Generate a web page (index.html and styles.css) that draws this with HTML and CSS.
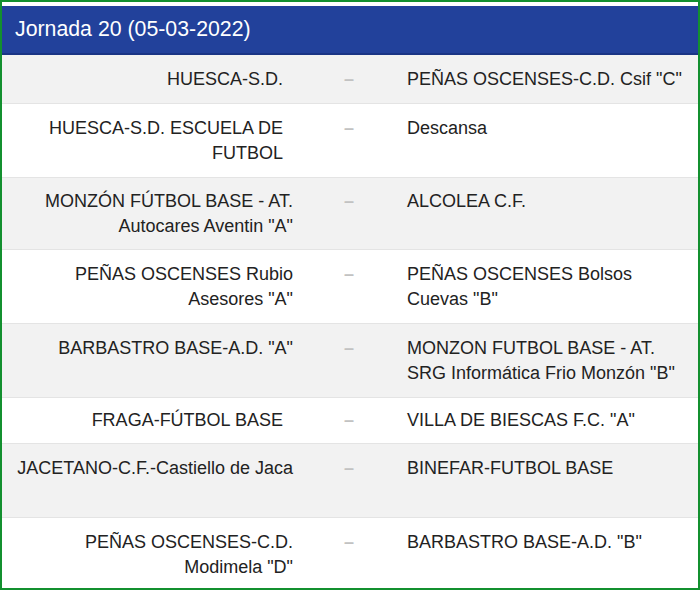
FILE: index.html
```html
<!DOCTYPE html>
<html lang="es">
<head>
<meta charset="utf-8">
<title>Jornada 20</title>
<link rel="stylesheet" href="styles.css">
</head>
<body>
<div class="frame">
  <div class="round">
    <h2 class="round__title">Jornada 20 (05-03-2022)</h2>
    <div class="match match--alt">
      <div class="team team--home team--inset">HUESCA-S.D.</div>
      <div class="sep">–</div>
      <div class="team team--away">PEÑAS OSCENSES-C.D. Csif "C"</div>
    </div>
    <div class="match">
      <div class="team team--home team--inset">HUESCA-S.D. ESCUELA DE FUTBOL</div>
      <div class="sep">–</div>
      <div class="team team--away">Descansa</div>
    </div>
    <div class="match match--alt match--snug">
      <div class="team team--home">MONZÓN FÚTBOL BASE - AT. Autocares Aventin "A"</div>
      <div class="sep">–</div>
      <div class="team team--away">ALCOLEA C.F.</div>
    </div>
    <div class="match">
      <div class="team team--home">PEÑAS OSCENSES Rubio Asesores "A"</div>
      <div class="sep">–</div>
      <div class="team team--away">PEÑAS OSCENSES Bolsos Cuevas "B"</div>
    </div>
    <div class="match match--alt">
      <div class="team team--home">BARBASTRO BASE-A.D. "A"</div>
      <div class="sep">–</div>
      <div class="team team--away">MONZON FUTBOL BASE - AT. SRG Informática Frio Monzón "B"</div>
    </div>
    <div class="match match--short">
      <div class="team team--home team--inset">FRAGA-FÚTBOL BASE</div>
      <div class="sep">–</div>
      <div class="team team--away">VILLA DE BIESCAS F.C. "A"</div>
    </div>
    <div class="match match--alt match--tall">
      <div class="team team--home">JACETANO-C.F.-Castiello de Jaca</div>
      <div class="sep">–</div>
      <div class="team team--away">BINEFAR-FUTBOL BASE</div>
    </div>
    <div class="match">
      <div class="team team--home">PEÑAS OSCENSES-C.D. Modimela "D"</div>
      <div class="sep">–</div>
      <div class="team team--away">BARBASTRO BASE-A.D. "B"</div>
    </div>
  </div>
</div>
</body>
</html>
```
FILE: styles.css
```css
html, body {
  margin: 0;
  padding: 0;
  background: #ffffff;
}

.frame {
  box-sizing: border-box;
  width: 700px;
  height: 590px;
  border: 2px solid #13902f;
  padding-top: 4px;
  overflow: hidden;
  font-family: "Liberation Sans", Arial, sans-serif;
  color: #222222;
}

.round {
  display: flex;
  flex-direction: column;
}

.round__title {
  margin: 0;
  height: 47px;
  display: flex;
  align-items: center;
  padding: 0 13px;
  background: #22419b;
  border-bottom: 2px solid #1a3585;
  color: #ffffff;
  font-size: 21.3px;
  font-weight: normal;
}

.match {
  box-sizing: border-box;
  display: grid;
  grid-template-columns: 281px 114px 281px;
  justify-content: center;
  align-items: start;
  padding: 12px 0 11px;
  border-bottom: 1px solid #e4e4e4;
  font-size: 18px;
  line-height: 25px;
  background: #ffffff;
}

.match--alt {
  background: #f2f2f2;
}

.match--short {
  padding: 10px 0;
}

.match--snug {
  padding: 11px 0 10px;
}

.match--tall {
  min-height: 74px;
}

.team--home {
  text-align: right;
}

.team--inset {
  padding-right: 10px;
}

.team--away {
  text-align: left;
}

.sep {
  text-align: center;
  color: #c2c2c2;
  font-weight: bold;
  padding-right: 2px;
}
```
